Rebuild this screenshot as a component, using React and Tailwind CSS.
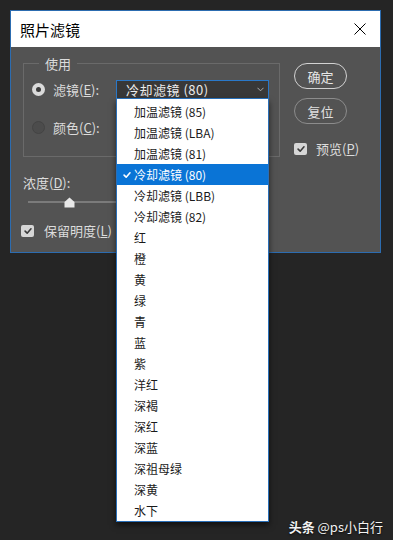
import React from 'react';

const filters = [
  '加温滤镜 (85)',
  '加温滤镜 (LBA)',
  '加温滤镜 (81)',
  '冷却滤镜 (80)',
  '冷却滤镜 (LBB)',
  '冷却滤镜 (82)',
  '红',
  '橙',
  '黄',
  '绿',
  '青',
  '蓝',
  '紫',
  '洋红',
  '深褐',
  '深红',
  '深蓝',
  '深祖母绿',
  '深黄',
  '水下',
];

const selected = '冷却滤镜 (80)';

const Check = ({ className }) => (
  <svg viewBox="0 0 12 12" className={className}>
    <path d="M2.5 6.2 L5 8.6 L9.6 3.4" fill="none" stroke="currentColor" strokeWidth="1.9" strokeLinecap="round" strokeLinejoin="round" />
  </svg>
);

const Checkbox = () => (
  <div className="w-[13px] h-[12px] rounded-[2px] bg-[#d6d6d6] flex items-center justify-center text-[#3a3a3a]">
    <Check className="w-[10px] h-[10px]" />
  </div>
);

const App = () => {
  return (
    <div
      className="relative w-[393px] h-[540px] overflow-hidden bg-[#252525] pt-[10px] pl-[10px]"
      style={{ fontFamily: '"Noto Sans CJK SC", "Noto Sans", sans-serif' }}
    >
      {/* Dialog */}
      <div className="w-[371px] h-[243px] border border-[#2c6cb0] bg-[#535353] flex flex-col">
        {/* Title bar */}
        <div className="h-[36px] bg-white flex items-center justify-between pl-[9px] pr-[14px]">
          <span className="text-[15px] text-black leading-none">照片滤镜</span>
          <svg viewBox="0 0 12 12" className="w-[12px] h-[12px] text-black">
            <path d="M0.5 0.5 L11.5 11.5 M11.5 0.5 L0.5 11.5" stroke="currentColor" strokeWidth="1" fill="none" />
          </svg>
        </div>

        {/* Body */}
        <div className="flex pl-[12px] text-[13px] text-[#dcdcdc]">
          <div className="w-[257px]">
            {/* Group box */}
            <div className="relative mt-[16px] h-[94px] border border-[#6a6a6a] pt-[16px] pl-[8px]">
              <span className="absolute -top-[10px] left-[15px] px-[6px] bg-[#535353] leading-[20px] text-[13px]">
                使用
              </span>

              <div className="flex items-center h-[19px]">
                <div className="w-[13px] h-[13px] rounded-full bg-[#dadada] flex items-center justify-center">
                  <div className="w-[5px] h-[5px] rounded-full bg-[#3c3c3c]" />
                </div>
                <span className="ml-[8px] w-[63px] leading-none">
                  滤镜(<span className="underline">E</span>):
                </span>
                <div className="relative w-[153px] h-[19px]">
                  <div className="h-full border border-[#2a78c8] bg-[#383838] flex items-center justify-between pl-[9px] pr-[4px] text-[#ececec] text-[13px] tracking-[0.5px]">
                    <span className="leading-none">{selected}</span>
                    <svg viewBox="0 0 8 5" className="w-[7px] h-[5px] text-[#bdbdbd]">
                      <path d="M0.5 0.5 L4 4 L7.5 0.5" stroke="currentColor" strokeWidth="1" fill="none" />
                    </svg>
                  </div>

                  {/* Dropdown menu */}
                  <div className="absolute left-0 top-full z-10 w-[153px] bg-white border-x border-b border-[#2a6fb8] pt-[2px] shadow-[0_3px_6px_rgba(0,0,0,0.6)]">
                    {filters.map((f) => (
                      <div
                        key={f}
                        className={`relative h-[21px] flex items-center pl-[17px] text-[12px] leading-none ${
                          f === selected ? 'bg-[#0a74d6] text-white' : 'text-[#1a1a1a]'
                        }`}
                      >
                        {f === selected && (
                          <Check className="absolute left-[5px] top-[6px] w-[10px] h-[10px] text-white" />
                        )}
                        {f}
                      </div>
                    ))}
                  </div>
                </div>
              </div>

              <div className="flex items-center h-[20px] mt-[18px]">
                <div className="w-[13px] h-[13px] rounded-full bg-[#4c4c4c] border border-[#444]" />
                <span className="ml-[8px] leading-none">
                  颜色(<span className="underline">C</span>):
                </span>
              </div>
            </div>

            {/* Density */}
            <div className="mt-[16px] leading-[20px]">
              浓度(<span className="underline">D</span>):
            </div>
            <div className="relative h-[12px] mt-[3px] ml-[5px] flex items-center">
              <div className="w-[240px] h-[2px] bg-[#7b7b7b]" />
              <svg viewBox="0 0 11 11" className="absolute left-[36px] top-[1px] w-[11px] h-[11px]">
                <path d="M5.5 0.5 L10.5 5 L10.5 10.5 L0.5 10.5 L0.5 5 Z" fill="#e8e8e8" />
              </svg>
            </div>

            <div className="flex items-center mt-[13px] -ml-[2px]">
              <Checkbox />
              <span className="ml-[10px] leading-[20px] text-[13px]">
                保留明度(<span className="underline">L</span>)
              </span>
            </div>
          </div>

          {/* Right column */}
          <div className="ml-[14px] flex flex-col items-start">
            <button className="mt-[16px] w-[53px] h-[26px] rounded-full border-[1.5px] border-[#d2d2d2] text-[13px] text-[#e6e6e6] leading-none">
              确定
            </button>
            <button className="mt-[9px] w-[53px] h-[26px] rounded-full border border-[#8c8c8c] text-[13px] text-[#e0e0e0] leading-none">
              复位
            </button>
            <div className="flex items-center mt-[15px]">
              <Checkbox />
              <span className="ml-[9px] leading-[20px]">
                预览(<span className="underline">P</span>)
              </span>
            </div>
          </div>
        </div>
      </div>

      {/* Watermark */}
      <div className="absolute right-[10px] bottom-[7px] text-[13px] text-[#f2f2f2] leading-none [text-shadow:0_1px_2px_rgba(0,0,0,0.8)]">
        <span className="font-bold">头条</span> @ps小白行
      </div>
    </div>
  );
};

export default App;
